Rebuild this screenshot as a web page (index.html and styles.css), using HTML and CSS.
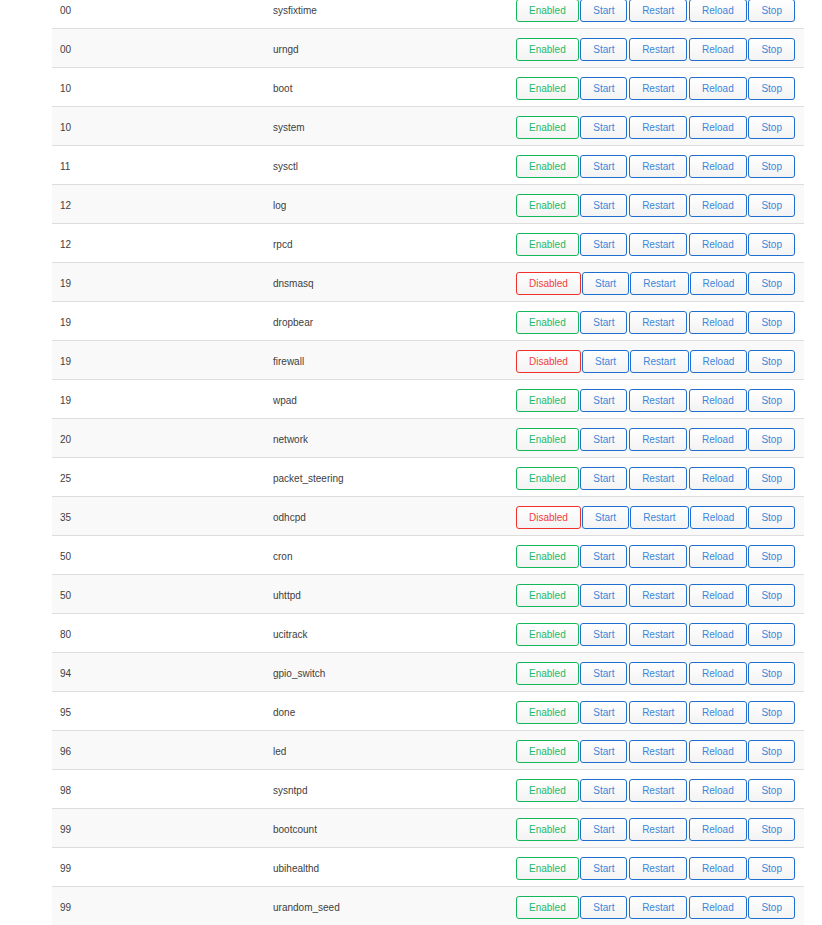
FILE: index.html
```html
<!DOCTYPE html>
<html>
<head>
<meta charset="utf-8">
<link rel="stylesheet" href="styles.css">
</head>
<body>
<div class="page">
<table class="services">
<colgroup><col class="c-prio"><col class="c-name"><col class="c-act"></colgroup>
<tbody>
<tr><td>00</td><td>sysfixtime</td><td><div class="btns"><button class="btn on">Enabled</button><button class="btn">Start</button><button class="btn">Restart</button><button class="btn">Reload</button><button class="btn">Stop</button></div></td></tr>
<tr><td>00</td><td>urngd</td><td><div class="btns"><button class="btn on">Enabled</button><button class="btn">Start</button><button class="btn">Restart</button><button class="btn">Reload</button><button class="btn">Stop</button></div></td></tr>
<tr><td>10</td><td>boot</td><td><div class="btns"><button class="btn on">Enabled</button><button class="btn">Start</button><button class="btn">Restart</button><button class="btn">Reload</button><button class="btn">Stop</button></div></td></tr>
<tr><td>10</td><td>system</td><td><div class="btns"><button class="btn on">Enabled</button><button class="btn">Start</button><button class="btn">Restart</button><button class="btn">Reload</button><button class="btn">Stop</button></div></td></tr>
<tr><td>11</td><td>sysctl</td><td><div class="btns"><button class="btn on">Enabled</button><button class="btn">Start</button><button class="btn">Restart</button><button class="btn">Reload</button><button class="btn">Stop</button></div></td></tr>
<tr><td>12</td><td>log</td><td><div class="btns"><button class="btn on">Enabled</button><button class="btn">Start</button><button class="btn">Restart</button><button class="btn">Reload</button><button class="btn">Stop</button></div></td></tr>
<tr><td>12</td><td>rpcd</td><td><div class="btns"><button class="btn on">Enabled</button><button class="btn">Start</button><button class="btn">Restart</button><button class="btn">Reload</button><button class="btn">Stop</button></div></td></tr>
<tr><td>19</td><td>dnsmasq</td><td><div class="btns"><button class="btn off">Disabled</button><button class="btn">Start</button><button class="btn">Restart</button><button class="btn">Reload</button><button class="btn">Stop</button></div></td></tr>
<tr><td>19</td><td>dropbear</td><td><div class="btns"><button class="btn on">Enabled</button><button class="btn">Start</button><button class="btn">Restart</button><button class="btn">Reload</button><button class="btn">Stop</button></div></td></tr>
<tr><td>19</td><td>firewall</td><td><div class="btns"><button class="btn off">Disabled</button><button class="btn">Start</button><button class="btn">Restart</button><button class="btn">Reload</button><button class="btn">Stop</button></div></td></tr>
<tr><td>19</td><td>wpad</td><td><div class="btns"><button class="btn on">Enabled</button><button class="btn">Start</button><button class="btn">Restart</button><button class="btn">Reload</button><button class="btn">Stop</button></div></td></tr>
<tr><td>20</td><td>network</td><td><div class="btns"><button class="btn on">Enabled</button><button class="btn">Start</button><button class="btn">Restart</button><button class="btn">Reload</button><button class="btn">Stop</button></div></td></tr>
<tr><td>25</td><td>packet_steering</td><td><div class="btns"><button class="btn on">Enabled</button><button class="btn">Start</button><button class="btn">Restart</button><button class="btn">Reload</button><button class="btn">Stop</button></div></td></tr>
<tr><td>35</td><td>odhcpd</td><td><div class="btns"><button class="btn off">Disabled</button><button class="btn">Start</button><button class="btn">Restart</button><button class="btn">Reload</button><button class="btn">Stop</button></div></td></tr>
<tr><td>50</td><td>cron</td><td><div class="btns"><button class="btn on">Enabled</button><button class="btn">Start</button><button class="btn">Restart</button><button class="btn">Reload</button><button class="btn">Stop</button></div></td></tr>
<tr><td>50</td><td>uhttpd</td><td><div class="btns"><button class="btn on">Enabled</button><button class="btn">Start</button><button class="btn">Restart</button><button class="btn">Reload</button><button class="btn">Stop</button></div></td></tr>
<tr><td>80</td><td>ucitrack</td><td><div class="btns"><button class="btn on">Enabled</button><button class="btn">Start</button><button class="btn">Restart</button><button class="btn">Reload</button><button class="btn">Stop</button></div></td></tr>
<tr><td>94</td><td>gpio_switch</td><td><div class="btns"><button class="btn on">Enabled</button><button class="btn">Start</button><button class="btn">Restart</button><button class="btn">Reload</button><button class="btn">Stop</button></div></td></tr>
<tr><td>95</td><td>done</td><td><div class="btns"><button class="btn on">Enabled</button><button class="btn">Start</button><button class="btn">Restart</button><button class="btn">Reload</button><button class="btn">Stop</button></div></td></tr>
<tr><td>96</td><td>led</td><td><div class="btns"><button class="btn on">Enabled</button><button class="btn">Start</button><button class="btn">Restart</button><button class="btn">Reload</button><button class="btn">Stop</button></div></td></tr>
<tr><td>98</td><td>sysntpd</td><td><div class="btns"><button class="btn on">Enabled</button><button class="btn">Start</button><button class="btn">Restart</button><button class="btn">Reload</button><button class="btn">Stop</button></div></td></tr>
<tr><td>99</td><td>bootcount</td><td><div class="btns"><button class="btn on">Enabled</button><button class="btn">Start</button><button class="btn">Restart</button><button class="btn">Reload</button><button class="btn">Stop</button></div></td></tr>
<tr><td>99</td><td>ubihealthd</td><td><div class="btns"><button class="btn on">Enabled</button><button class="btn">Start</button><button class="btn">Restart</button><button class="btn">Reload</button><button class="btn">Stop</button></div></td></tr>
<tr><td>99</td><td>urandom_seed</td><td><div class="btns"><button class="btn on">Enabled</button><button class="btn">Start</button><button class="btn">Restart</button><button class="btn">Reload</button><button class="btn">Stop</button></div></td></tr>
</tbody>
</table>
</div>
</body>
</html>
```
FILE: styles.css
```css
html, body {
  margin: 0;
  padding: 0;
  background: #fff;
}
body {
  font-family: "Liberation Sans", Arial, sans-serif;
  font-size: 10px;
  color: #404040;
  overflow: hidden;
}
.page {
  padding: 0 18px 0 52px;
  margin-top: -11px;
}
.services {
  width: 100%;
  border-collapse: collapse;
  table-layout: fixed;
}
.c-prio { width: 213px; }
.c-name { width: 243px; }
.services td {
  padding: 3px 8px 0 8px;
  border-top: 1px solid #dddddd;
  vertical-align: middle;
  box-sizing: border-box;
  height: 39px;
  white-space: nowrap;
}
.services td:last-child {
  padding: 2px 9px 0 8px;
}
.services tr:nth-child(even) td {
  background: #f9f9f9;
}
.btns {
  display: flex;
  justify-content: space-between;
}
.btn {
  font-family: "Liberation Sans", Arial, sans-serif;
  font-size: 10px;
  height: 23px;
  padding: 0 12px;
  margin: 0;
  border: 1px solid #1f6fd0;
  border-radius: 3px;
  color: #3b86d9;
  background: linear-gradient(#ffffff, #f3f3f3);
  line-height: 21px;
  cursor: pointer;
}
.btn.on {
  border-color: #14b85a;
  color: #1dba66;
}
.btn.off {
  border-color: #f0302a;
  color: #f2403a;
}
```
